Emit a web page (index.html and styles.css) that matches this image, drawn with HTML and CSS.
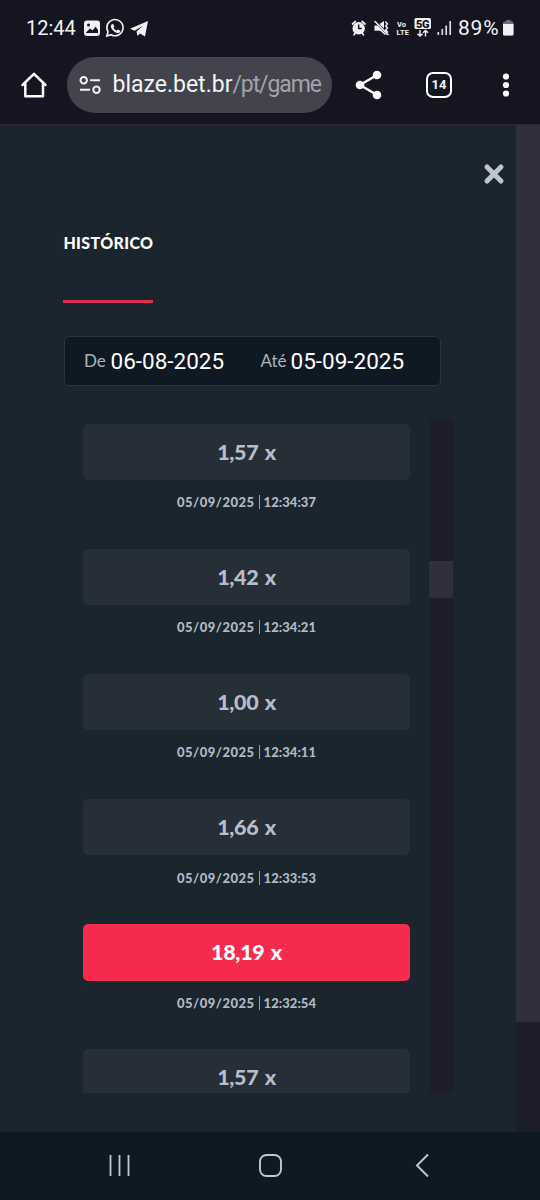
FILE: index.html
```html
<!DOCTYPE html>
<html lang="pt-BR">
<head>
<meta charset="utf-8">
<title>Histórico</title>
<link rel="stylesheet" href="styles.css">
</head>
<body>
<header class="chrome">
  <div class="status">
    <span class="clock">12:44</span>
    <svg class="notifications" width="66" height="20" viewBox="83 18 66 20">
      <rect x="84" y="20.500" width="16" height="15.500" rx="3" fill="#f1f1f4"/>
      <circle cx="88.500" cy="25" r="1.500" fill="#131520"/>
      <path d="M86 32.500L90 28.500L92.500 30.500L95.500 26.500L98 30V33H86Z" fill="#131520"/>
      <path d="M106.800 36l1.200-4.200a8.100 8.100 0 1 1 3 2.900z" fill="none" stroke="#f1f1f4" stroke-width="1.600"/>
      <path d="M111.800 24.200l1.200-.5 1.300 2.800-.9 1.200q1.200 2.200 3.300 3l1.200-1.200 2.600 1.300q-.3 2.400-2.700 2.400-3.300-.5-5.700-3.800-2.400-3.400-.3-5.200z" fill="#f1f1f4"/>
      <path d="M130 28.700L148 21 145 36.500 140 33.400 137.500 36 136.500 31.500 143 25.700 134.500 30.800Z" fill="#f1f1f4"/>
    </svg>
    <svg class="signals" width="104" height="24" viewBox="350 15 104 24">
      <g fill="none" stroke="#f1f1f4" stroke-width="1.700" stroke-linecap="round">
        <path d="M352.500 24l2.800-2.500M365 24l-2.800-2.500M355 33.500l-1 1.300M362.500 33.500l1 1.300"/>
        <path d="M375 21.500l13 13M385.800 22l1.600 2-1.600 2 1.600 2-1.600 2 1.600 2-1.600 2" stroke-width="1.500"/>
      </g>
      <circle cx="358.700" cy="28.300" r="6.200" fill="#f1f1f4"/>
      <path d="M358.700 24.500v4h3" fill="none" stroke="#131520" stroke-width="1.500"/>
      <path d="M374.500 25.500h3l7.500 7.500v2l-5-4.200h-5.500zM379.500 24l4.500-3v7.500z" fill="#f1f1f4"/>
      <text class="volte" x="397" y="27">Vo</text><text class="volte" x="396.500" y="34.500" textLength="12.500">LTE</text>
      <rect x="414.500" y="18" width="16.500" height="11" rx="1.500" fill="#f1f1f4"/>
      <text class="network" x="416" y="27.500" textLength="13.500">5G</text>
      <path d="M420 30v6m-2.500-2.300l2.500 2.300 2.500-2.300M425.500 36.500v-6m-2.500 2.300l2.500-2.300 2.500 2.300" fill="none" stroke="#f1f1f4" stroke-width="1.400"/>
      <path d="M438.300 32v3M442.300 29v6M446.200 25.500v9.500M450.200 21v14" fill="none" stroke="#d9dae0" stroke-width="1.700"/>
    </svg>
    <span class="percent">89%</span>
    <svg class="battery" width="12" height="18" viewBox="0 0 12 18"><rect x="4" y="1" width="5" height="4" rx="1" fill="#6f7078"/><rect x="1" y="2.500" width="10.500" height="14" rx="1.500" fill="#6f7078"/><path d="M1 5h10.500v10a1.500 1.500 0 0 1-1.500 1.500H2.500A1.500 1.500 0 0 1 1 15z" fill="#f1f1f4"/></svg>
  </div>
  <div class="toolbar">
    <svg class="home" width="28" height="28" viewBox="20 71 28 28"><path d="M22.500 85L34 73.800 45.500 85M25.300 83.500V96.300H43V83.500" fill="none" stroke="#fff" stroke-width="2.500" stroke-linejoin="round" stroke-linecap="round"/></svg>
    <div class="address">
      <svg width="24" height="20" viewBox="78 74.500 24 20" fill="none" stroke="#f1f1f4" stroke-width="2"><circle cx="83.700" cy="79.800" r="3.200"/><circle cx="96.500" cy="89.200" r="3.200"/><path d="M90 79.800h10M80 89.200h10"/></svg>
      <span class="url"><span class="domain">blaze.bet.br</span><span class="path">/pt/game</span></span>
    </div>
    <svg class="share" width="28" height="30" viewBox="355 69.500 28 30"><path d="M377 74.500L360 84.500 377 94.500" fill="none" stroke="#fff" stroke-width="2.400"/><g fill="#fff"><circle cx="377" cy="74.500" r="4.300"/><circle cx="360" cy="84.500" r="4.300"/><circle cx="377" cy="94.500" r="4.300"/></g></svg>
    <span class="tabs">14</span>
    <svg class="more" width="8" height="26" viewBox="0 0 8 26" fill="#fff"><circle cx="4" cy="4.500" r="3.100"/><circle cx="4" cy="13" r="3.100"/><circle cx="4" cy="21.500" r="3.100"/></svg>
  </div>
</header>
<main class="page">
  <section class="modal">
    <svg class="close" width="22" height="22" viewBox="0 0 22 22"><path d="M4 4L18 18M18 4L4 18" stroke="#bfc4d0" stroke-width="5" stroke-linecap="round"/></svg>
    <h1 class="title"><span>HISTÓRICO</span></h1>
    <div class="dates">
      <span class="label from">De</span><span class="date">06-08-2025</span>
      <span class="label until">Até</span><span class="date">05-09-2025</span>
    </div>
    <div class="history">
      <div class="entries">
        <article class="entry"><div class="value">1,57 x</div><div class="time"><span class="day">05/09/2025</span><i></i><span>12:34:37</span></div></article>
        <article class="entry"><div class="value">1,42 x</div><div class="time"><span class="day">05/09/2025</span><i></i><span>12:34:21</span></div></article>
        <article class="entry"><div class="value">1,00 x</div><div class="time"><span class="day">05/09/2025</span><i></i><span>12:34:11</span></div></article>
        <article class="entry"><div class="value">1,66 x</div><div class="time"><span class="day">05/09/2025</span><i></i><span>12:33:53</span></div></article>
        <article class="entry"><div class="value hot">18,19 x</div><div class="time"><span class="day">05/09/2025</span><i></i><span>12:32:54</span></div></article>
        <article class="entry"><div class="value">1,57 x</div></article>
      </div>
      <div class="track"><div class="thumb"></div></div>
    </div>
  </section>
  <div class="page-track"><div class="page-thumb"></div></div>
</main>
<nav class="system-nav">
  <svg width="24" height="24" viewBox="0 0 24 24" stroke="#c3c7cd" stroke-width="1.800"><path d="M3.500 2v21M12.500 2v21M21.500 2v21"/></svg>
  <svg width="24" height="24" viewBox="0 0 24 24"><rect x="1" y="2" width="21" height="21" rx="6.500" fill="none" stroke="#c3c7cd" stroke-width="1.900"/></svg>
  <svg width="24" height="24" viewBox="0 0 24 24"><path d="M18 1.500L7 12.500 18 23.500" fill="none" stroke="#c3c7cd" stroke-width="2"/></svg>
</nav>
</body>
</html>
```
FILE: styles.css
```css
* { box-sizing: border-box; }
body { margin: 0; width: 540px; height: 1200px; overflow: hidden; background: #1b252d; color: #f4f4f7; font-family: Roboto, sans-serif; }
svg { display: block; flex: none; }
.chrome { height: 125px; background: #131520; border-bottom: 1px solid #242b35; }
.status { height: 56px; display: flex; align-items: center; padding-left: 26px; }
.clock { width: 57px; font-size: 20px; white-space: nowrap; }
.signals { margin-left: 201px; margin-top: -2px; }
.volte { font: 700 7.500px Roboto, sans-serif; fill: #f1f1f4; }
.network { font: 900 11px Roboto, sans-serif; fill: #131520; }
.percent { width: 44px; margin-left: 4px; font-size: 21px; letter-spacing: .8px; }
.toolbar { height: 57px; display: flex; align-items: center; padding-left: 20px; }
.address { width: 265px; height: 56px; margin-left: 19px; padding-left: 11px; border-radius: 28px; background: #42444d; display: flex; align-items: center; }
.url { width: 211px; margin-left: 10.500px; white-space: nowrap; font-size: 23px; line-height: 30px; letter-spacing: 0; }
.path { color: #a2a3aa; letter-spacing: -1.100px; }
.share { margin-left: 23px; }
.tabs { width: 26px; height: 26px; margin-left: 43px; border: 2.500px solid #fff; border-radius: 7px; font-size: 13px; font-weight: 700; line-height: 22px; text-align: center; }
.more { margin-left: 50px; }
.page { height: 1007px; display: flex; }
.modal { width: 516px; padding: 38px 63px 0 63px; font-family: Lato, sans-serif; }
.close { margin-left: 420px; }
.title { width: 90px; height: 118px; margin: 0 0 0 .4px; padding-top: 48px; border-bottom: 3px solid #dc3150; color: #fff; font-size: 16px; line-height: 20px; font-weight: 900; letter-spacing: .35px; white-space: nowrap; }
.dates { width: 377px; height: 50px; margin: 33px 0 0 .5px; border: 1px solid #2a343d; border-radius: 5px; background: #0f1923; display: flex; align-items: center; }
.label { color: #aeb3bf; font-size: 17px; line-height: 20px; margin-top: -1px; }
.from { width: 26.500px; margin-left: 19.500px; }
.until { width: 30px; margin-left: 36px; }
.date { width: 114px; color: #fff; font: 22.500px Roboto, sans-serif; white-space: nowrap; }
.history { width: 390px; height: 674px; margin-top: 33px; display: flex; justify-content: space-between; overflow: hidden; }
.entries { width: 347px; height: 674px; padding: 4.500px 0 0 20px; overflow: hidden; }
.entry { height: 125.200px; }
.value { height: 56.300px; border-radius: 5px; background: #262f37; color: #b9bdca; text-align: center; font-size: 21.500px; font-weight: 900; line-height: 57px; letter-spacing: -.3px; word-spacing: 1.500px; }
.value.hot { background: #f52c4e; color: #fff; }
.time { height: 20px; margin-top: 12.200px; display: flex; align-items: center; justify-content: center; gap: 4px; color: #b3b9c5; font-size: 13px; font-weight: 900; letter-spacing: .05px; }
.day { letter-spacing: .5px; }
.time i { width: 1px; height: 14px; background: #9ba1ac; }
.track { width: 24px; background: #1c1e2a; padding-top: 142px; }
.thumb { height: 37px; background: #2e303c; }
.page-track { width: 24px; background: #1c1e2a; }
.page-thumb { height: 897px; background: #2e303c; }
.system-nav { height: 68px; background: #0f1923; display: flex; justify-content: space-between; padding: 21px 106px 0 107px; }
```
